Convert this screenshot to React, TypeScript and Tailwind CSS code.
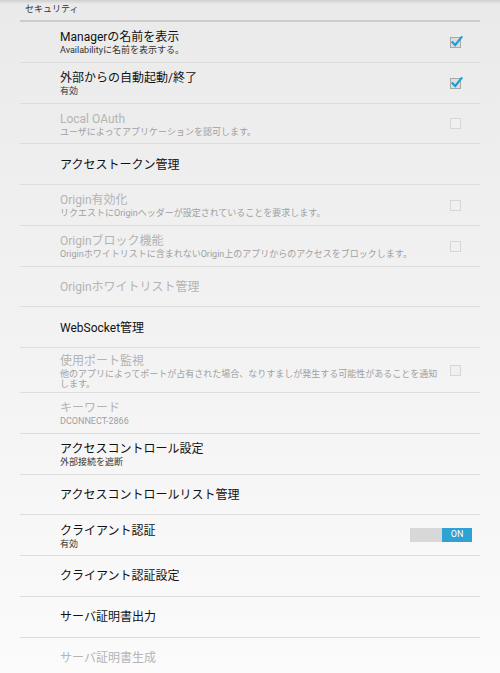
const FONT = "font-['Roboto','Noto_Sans_CJK_JP',sans-serif]";

type Pref = {
  title: string;
  summary?: string;
  disabled?: boolean;
  control?: "checked" | "unchecked" | "toggle";
  tall?: boolean;
};

const prefs: Pref[] = [
  { title: "Managerの名前を表示", summary: "Availabilityに名前を表示する。", control: "checked" },
  { title: "外部からの自動起動/終了", summary: "有効", control: "checked" },
  { title: "Local OAuth", summary: "ユーザによってアプリケーションを認可します。", disabled: true, control: "unchecked" },
  { title: "アクセストークン管理" },
  { title: "Origin有効化", summary: "リクエストにOriginヘッダーが設定されていることを要求します。", disabled: true, control: "unchecked" },
  { title: "Originブロック機能", summary: "Originホワイトリストに含まれないOrigin上のアプリからのアクセスをブロックします。", disabled: true, control: "unchecked" },
  { title: "Originホワイトリスト管理", disabled: true },
  { title: "WebSocket管理" },
  { title: "使用ポート監視", summary: "他のアプリによってポートが占有された場合、なりすましが発生する可能性があることを通知します。", disabled: true, control: "unchecked", tall: true },
  { title: "キーワード", summary: "DCONNECT-2866", disabled: true },
  { title: "アクセスコントロール設定", summary: "外部接続を遮断" },
  { title: "アクセスコントロールリスト管理" },
  { title: "クライアント認証", summary: "有効", control: "toggle" },
  { title: "クライアント認証設定" },
  { title: "サーバ証明書出力" },
  { title: "サーバ証明書生成", disabled: true },
];

const CheckBox = ({ checked, disabled }: { checked: boolean; disabled?: boolean }) => (
  <svg width="16" height="16" viewBox="0 0 16 16">
    <rect
      x="2.5"
      y="3.5"
      width="10"
      height="10"
      fill={disabled ? "#f0f0f0" : "#dedede"}
      stroke={disabled ? "#d6d6d6" : "#a8a8a8"}
    />
    {checked && (
      <path d="M4.5 8.2 L7.2 11 L13.5 3.2" fill="none" stroke="#1e9fd6" strokeWidth="2.2" strokeLinecap="square" />
    )}
  </svg>
);

const Toggle = () => (
  <div className="flex h-[14px] w-[62px]">
    <div className="w-[32px] bg-[#d8d8d8]" />
    <div className="flex flex-1 items-center justify-center bg-[#2ea3d3] text-[9px] text-white">ON</div>
  </div>
);

const PrefRow = ({ pref }: { pref: Pref }) => (
  <div
    className={`flex items-center border-b border-[#dddddd] pl-[40px] ${pref.tall ? "h-[45px]" : "h-[40.75px]"}`}
  >
    <div className="flex w-[380px] flex-col pt-[2px]">
      <span className={`text-[12px] leading-[15px] ${pref.disabled ? "text-[#b4b4b4]" : "text-[#111111]"}`}>
        {pref.title}
      </span>
      {pref.summary && (
        <span className={`text-[9px] leading-[10px] ${pref.disabled ? "text-[#a0a0a0]" : "text-[#333333]"}`}>
          {pref.summary}
        </span>
      )}
    </div>
    <div className={`ml-auto flex items-center ${pref.control === "toggle" ? "pr-[8px]" : "pr-[16px]"}`}>
      {pref.control === "checked" && <CheckBox checked />}
      {pref.control === "unchecked" && <CheckBox checked={false} disabled={pref.disabled} />}
      {pref.control === "toggle" && <Toggle />}
    </div>
  </div>
);

export default function App() {
  return (
    <div className={`relative h-[673px] w-[500px] overflow-hidden bg-gradient-to-b from-[#eaeaea] to-[#fbfbfb] ${FONT}`}>
      <div className="pointer-events-none absolute inset-x-0 top-0 h-[4px] bg-gradient-to-b from-[#cfcfcf] to-transparent" />
      <div className="mx-[20px]">
        <div className="flex h-[22px] items-center border-b-2 border-[#cccccc] pl-[5px]">
          <span className="text-[9px] text-[#333333]">セキュリティ</span>
        </div>
        {prefs.map((p) => (
          <PrefRow key={p.title} pref={p} />
        ))}
      </div>
    </div>
  );
}
